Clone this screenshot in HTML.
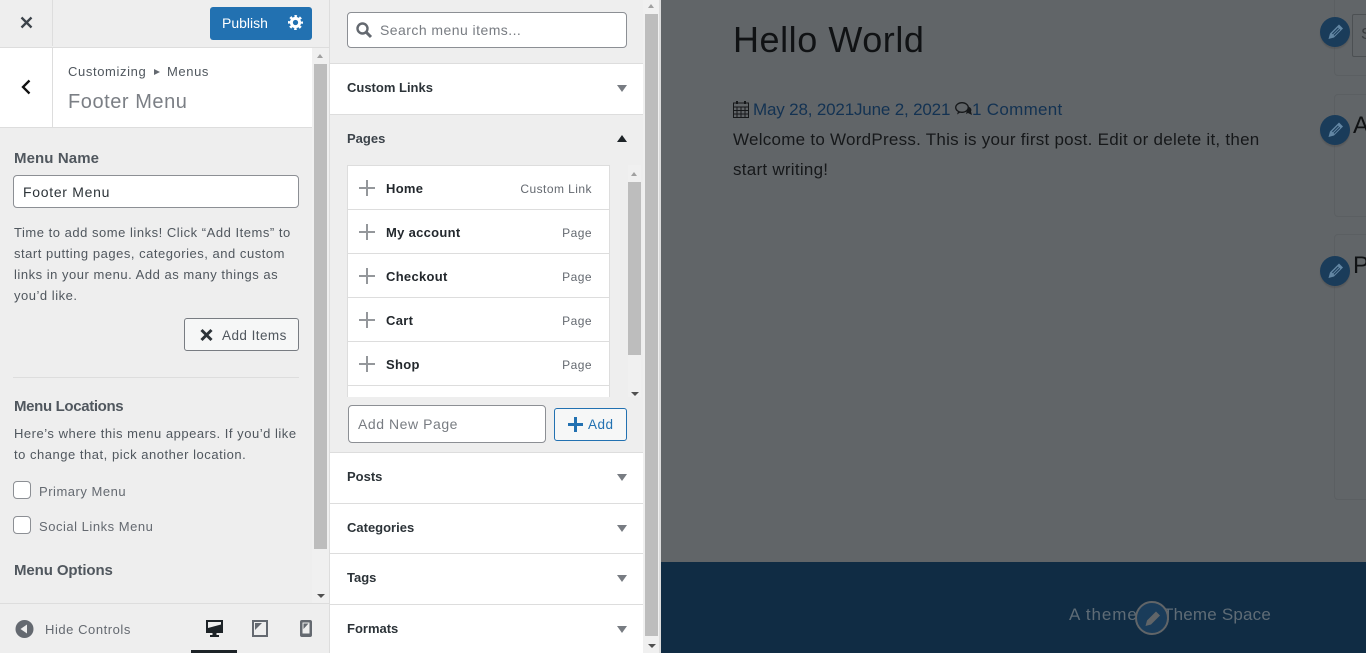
<!DOCTYPE html>
<html><head><meta charset="utf-8"><title>Customize</title>
<style>
*{box-sizing:border-box}
html,body{margin:0;padding:0;width:1366px;height:653px;overflow:hidden;background:#616568}
body{font-family:"Liberation Sans",sans-serif;font-size:14px;color:#50575e;position:relative}
.a{position:absolute}
.t{position:absolute;white-space:nowrap;line-height:20px}
.s{font-size:13px;letter-spacing:.52px}
.sec{position:absolute;left:330px;width:313px;background:#fff;border-top:1px solid #ddd}
.b{font-weight:700;font-size:13px;color:#2c3338}
.dn{position:absolute;left:617px;width:0;height:0;border-left:5px solid transparent;border-right:5px solid transparent;border-top:7px solid #787c82}
.up{position:absolute;width:0;height:0;border-left:3.5px solid transparent;border-right:3.5px solid transparent;border-bottom:4px solid #a0a0a0}
.sd{position:absolute;width:0;height:0;border-left:4px solid transparent;border-right:4px solid transparent;border-top:4px solid #505050}
.row{position:absolute;left:348px;width:261px;height:44px;background:#fff;border-bottom:1px solid #ddd}
.pl{position:absolute;left:11px;top:14px;width:16px;height:16px}
.pl:before{content:"";position:absolute;left:7px;top:0;width:2px;height:16px;background:#94979b}
.pl:after{content:"";position:absolute;left:0;top:7px;width:16px;height:2px;background:#94979b}
.rn{position:absolute;left:38px;top:13px;font-size:13px;font-weight:700;color:#23282d;line-height:20px;white-space:nowrap;letter-spacing:.3px}
.rt{position:absolute;right:17px;top:13px;font-size:12px;color:#646970;line-height:20px;white-space:nowrap;letter-spacing:.45px}
.pen{position:absolute;width:30px;height:30px;border-radius:50%;background:#1a3c5a;box-shadow:0 2px 1px rgba(70,70,70,.35)}
.pen svg{position:absolute;left:8px;top:6px}
</style></head><body>

<!-- left panel -->
<div class="a" style="left:0;top:0;width:329px;height:653px;background:#eee"></div>
<div class="a" style="left:329px;top:0;width:1px;height:653px;background:#ddd"></div>

<!-- header -->
<div class="a" style="left:52px;top:0;width:1px;height:46px;background:#ddd"></div>
<div class="a" style="left:0;top:47px;width:329px;height:1px;background:#ddd"></div>
<svg class="a" style="left:20px;top:16px" width="13" height="13" viewBox="0 0 13 13"><path d="M1.500 1.500L11.500 11.500M11.500 1.500L1.500 11.500" stroke="#3c434a" stroke-width="2.300" fill="none"/></svg>
<div class="a" style="left:210px;top:7px;width:102px;height:33px;background:#2271b1;border-radius:3px"></div>
<div class="t" style="left:222px;top:13px;color:#fff;font-size:14px">Publish</div>
<svg class="a" style="left:288px;top:15px" width="15" height="15" viewBox="0 0 20 20"><circle cx="10" cy="10" r="5.500" fill="none" stroke="#fff" stroke-width="4"/><circle cx="10" cy="10" r="8.500" fill="none" stroke="#fff" stroke-width="3" stroke-dasharray="3.340 3.340" stroke-dashoffset="1.670"/></svg>

<!-- title section -->
<div class="a" style="left:0;top:48px;width:312px;height:79px;background:#fff"></div>
<div class="a" style="left:0;top:127px;width:312px;height:1px;background:#ddd"></div>
<div class="a" style="left:52px;top:48px;width:1px;height:80px;background:#ddd"></div>
<svg class="a" style="left:20px;top:79px" width="12" height="16" viewBox="0 0 12 16"><path d="M9.500 1.500L3 8l6.500 6.500" stroke="#111" stroke-width="2.300" fill="none"/></svg>
<div class="t" style="left:68px;top:62px;font-size:13px;letter-spacing:.62px;color:#50575e">Customizing</div>
<div class="a" style="left:154px;top:69px;width:0;height:0;border-left:6px solid #646970;border-top:3px solid transparent;border-bottom:3px solid transparent"></div>
<div class="t" style="left:167px;top:62px;font-size:13px;letter-spacing:.6px;color:#50575e">Menus</div>
<div class="t" style="left:68px;top:89px;font-size:20px;line-height:26px;color:#7b7f85;letter-spacing:.55px">Footer Menu</div>

<!-- left scrollbar -->
<div class="a" style="left:312px;top:48px;width:17px;height:555px;background:#f0f0f0"></div>
<div class="a" style="left:314px;top:64px;width:13px;height:485px;background:#bdbdbd"></div>
<div class="up" style="left:317px;top:54px"></div>
<div class="sd" style="left:317px;top:594px"></div>

<!-- left content -->
<div class="t" style="left:14px;top:149px;font-size:15px;font-weight:700;color:#50575e;letter-spacing:.1px">Menu Name</div>
<div class="a" style="left:13px;top:175px;width:286px;height:33px;background:#fff;border:1px solid #8c8f94;border-radius:4px"></div>
<div class="t" style="left:23px;top:182px;font-size:14px;letter-spacing:.7px;color:#2c3338">Footer Menu</div>
<div class="t s" style="left:14px;top:222px;line-height:21px;color:#50575e">Time to add some links! Click “Add Items” to<br>start putting pages, categories, and custom<br>links in your menu. Add as many things as<br>you’d like.</div>
<div class="a" style="left:184px;top:318px;width:115px;height:33px;background:#f6f7f7;border:1px solid #787c82;border-radius:3px"></div>
<svg class="a" style="left:200px;top:328px" width="13" height="14" viewBox="0 0 13 14"><path d="M1.500 2L11.500 12M11.500 2L1.500 12" stroke="#2c3338" stroke-width="3" fill="none"/></svg>
<div class="t" style="left:222px;top:326px;font-size:13.500px;letter-spacing:.45px;color:#50575e">Add Items</div>
<div class="a" style="left:13px;top:377px;width:286px;height:1px;background:#ddd"></div>
<div class="t" style="left:14px;top:397px;font-size:15px;font-weight:700;color:#50575e;letter-spacing:-.35px">Menu Locations</div>
<div class="t s" style="left:14px;top:423px;line-height:21px;color:#50575e">Here’s where this menu appears. If you’d like<br>to change that, pick another location.</div>
<div class="a" style="left:13px;top:481px;width:18px;height:18px;background:#fff;border:1px solid #8c8f94;border-radius:4px"></div>
<div class="t s" style="left:39px;top:482px;color:#646970">Primary Menu</div>
<div class="a" style="left:13px;top:516px;width:18px;height:18px;background:#fff;border:1px solid #8c8f94;border-radius:4px"></div>
<div class="t s" style="left:39px;top:517px;color:#646970">Social Links Menu</div>
<div class="t" style="left:14px;top:561px;font-size:15px;font-weight:700;color:#50575e;letter-spacing:-.1px">Menu Options</div>

<!-- footer controls -->
<div class="a" style="left:0;top:603px;width:329px;height:50px;background:#eee;border-top:1px solid #ddd"></div>
<svg class="a" style="left:15px;top:620px" width="19" height="18" viewBox="0 0 18 18"><circle cx="9" cy="9" r="9" fill="#646970"/><path d="M11.500 4.500v9L5 9z" fill="#eee"/></svg>
<div class="t" style="left:45px;top:620px;font-size:13px;letter-spacing:.55px;color:#646970">Hide Controls</div>
<svg class="a" style="left:205px;top:619px" width="19" height="19" viewBox="0 0 19 19"><path fill="#1d2327" d="M1 1h17v13H11.500v2H14v2H5v-2h2.500v-2H1z"/><path fill="#eee" d="M3 3h13v2.500L3 9z"/></svg>
<div class="a" style="left:191px;top:650px;width:46px;height:3px;background:#1d2327"></div>
<svg class="a" style="left:252px;top:620px" width="16" height="17" viewBox="0 0 16 17"><path fill="#646970" d="M0 0h16v17H0z"/><path fill="#eee" d="M2 2h12v13H2z"/><path fill="#646970" d="M3 3h7L3 10z"/></svg>
<svg class="a" style="left:300px;top:620px" width="12" height="17" viewBox="0 0 12 17"><path fill="#646970" d="M2 0h8a2 2 0 0 1 2 2v13a2 2 0 0 1-2 2H2a2 2 0 0 1-2-2V2a2 2 0 0 1 2-2z"/><path fill="#eee" d="M2.500 2.500h7v11h-7z"/><path fill="#646970" d="M3.500 3.500h5L3.500 9z"/></svg>

<!-- middle panel -->
<div class="a" style="left:330px;top:0;width:331px;height:653px;background:#eee"></div>

<!-- search -->
<div class="a" style="left:347px;top:12px;width:280px;height:36px;background:#fff;border:1px solid #8c8f94;border-radius:4px"></div>
<svg class="a" style="left:355px;top:21px" width="18" height="18" viewBox="0 0 18 18"><circle cx="7.500" cy="7.500" r="5" stroke="#646970" stroke-width="2.400" fill="none"/><path d="M11.300 11.300L16 16" stroke="#646970" stroke-width="3" fill="none"/></svg>
<div class="t" style="left:380px;top:20px;font-size:14px;letter-spacing:.45px;color:#787c82">Search menu items...</div>

<!-- sections -->
<div class="sec" style="top:63px;height:51px"></div>
<div class="t b" style="left:347px;top:78px">Custom Links</div>
<div class="dn" style="top:85px"></div>
<div class="a" style="left:330px;top:114px;width:313px;height:1px;background:#ddd"></div>
<div class="t b" style="left:347px;top:129px;color:#3c434a">Pages</div>
<div class="a" style="left:617px;top:135px;width:0;height:0;border-left:5px solid transparent;border-right:5px solid transparent;border-bottom:7px solid #1d2327"></div>

<!-- pages list -->
<div class="a" style="left:347px;top:165px;width:263px;height:232px;background:#fff;border:1px solid #ddd;border-bottom:0"></div>
<div class="row" style="top:166px"><span class="pl"></span><span class="rn">Home</span><span class="rt">Custom Link</span></div>
<div class="row" style="top:210px"><span class="pl"></span><span class="rn">My account</span><span class="rt">Page</span></div>
<div class="row" style="top:254px"><span class="pl"></span><span class="rn">Checkout</span><span class="rt">Page</span></div>
<div class="row" style="top:298px"><span class="pl"></span><span class="rn">Cart</span><span class="rt">Page</span></div>
<div class="row" style="top:342px"><span class="pl"></span><span class="rn">Shop</span><span class="rt">Page</span></div>

<!-- inner scrollbar -->
<div class="a" style="left:628px;top:165px;width:13px;height:232px;background:#f0f0f0"></div>
<div class="a" style="left:628px;top:182px;width:13px;height:173px;background:#bdbdbd"></div>
<div class="up" style="left:631px;top:172px"></div>
<div class="sd" style="left:631px;top:392px"></div>

<!-- add new page -->
<div class="a" style="left:348px;top:405px;width:198px;height:38px;background:#fff;border:1px solid #8c8f94;border-radius:4px"></div>
<div class="t" style="left:358px;top:414px;font-size:14px;letter-spacing:.55px;color:#787c82">Add New Page</div>
<div class="a" style="left:554px;top:408px;width:73px;height:33px;background:#f6f7f7;border:1px solid #2271b1;border-radius:3px"></div>
<svg class="a" style="left:568px;top:417px" width="15" height="15" viewBox="0 0 15 15"><path d="M7.500 0v15M0 7.500h15" stroke="#2271b1" stroke-width="3"/></svg>
<div class="t" style="left:588px;top:415px;font-size:13.500px;letter-spacing:.5px;color:#2271b1">Add</div>

<div class="sec" style="top:452px;height:51px"></div>
<div class="t b" style="left:347px;top:467px">Posts</div>
<div class="dn" style="top:474px"></div>
<div class="sec" style="top:503px;height:51px"></div>
<div class="t b" style="left:347px;top:518px">Categories</div>
<div class="dn" style="top:525px"></div>
<div class="sec" style="top:553px;height:51px"></div>
<div class="t b" style="left:347px;top:568px">Tags</div>
<div class="dn" style="top:575px"></div>
<div class="sec" style="top:604px;height:49px"></div>
<div class="t b" style="left:347px;top:619px">Formats</div>
<div class="dn" style="top:626px"></div>

<!-- middle scrollbar -->
<div class="a" style="left:643px;top:0;width:16px;height:653px;background:#f0f0f0"></div>
<div class="a" style="left:645px;top:14px;width:13px;height:622px;background:#bdbdbd"></div>
<div class="up" style="left:648px;top:4px"></div>
<div class="sd" style="left:648px;top:644px"></div>
<div class="a" style="left:659px;top:0;width:2px;height:653px;background:#ddd"></div>

<!-- preview -->
<div class="a" style="left:661px;top:0;width:705px;height:562px;background:#616568"></div>
<div class="a" style="left:661px;top:562px;width:705px;height:91px;background:#102c44"></div>
<div class="t" style="left:733px;top:18px;font-size:36px;line-height:44px;letter-spacing:.55px;color:#101214">Hello World</div>
<svg class="a" style="left:733px;top:100px" width="16" height="18" viewBox="0 0 16 18"><path fill="none" stroke="#16181a" stroke-width="1" d="M.5 3h15v14.500H.5zM.5 7h15M.5 10.500h15M.5 14h15M4 7v10.500M8 7v10.500M12 7v10.500"/><path stroke="#16181a" stroke-width="2" d="M4 1v3M12 1v3"/></svg>
<div class="t" style="left:753px;top:100px;font-size:17px;letter-spacing:-.17px;color:#133252">May 28, 2021June 2, 2021</div>
<svg class="a" style="left:955px;top:102px" width="18" height="14" viewBox="0 0 18 14"><ellipse cx="7" cy="5.500" rx="6.300" ry="4.800" fill="none" stroke="#16181a" stroke-width="1.300"/><path d="M3 9.500L2 12.500 6 10zM13 4.500c3 1 4 3 3 5l1 3.500-4-2-2 1z" fill="#16181a"/></svg>
<div class="t" style="left:972px;top:100px;font-size:17px;letter-spacing:.3px;color:#133252">1 Comment</div>
<div class="t" style="left:733px;top:125px;font-size:17px;line-height:30px;letter-spacing:.26px;color:#16181a">Welcome to WordPress. This is your first post. Edit or delete it, then<br>start writing!</div>

<!-- widgets at right -->
<div class="a" style="left:1334px;top:-20px;width:40px;height:96px;border:1px solid #5b5f62;border-radius:4px"></div>
<div class="a" style="left:1352px;top:14px;width:20px;height:43px;border:1px solid #4c5053;border-radius:2px"></div>
<div class="t" style="left:1361px;top:25px;font-size:16px;color:#3a3d40">S</div>
<div class="a" style="left:1334px;top:94px;width:40px;height:123px;border:1px solid #5b5f62;border-radius:4px"></div>
<div class="t" style="left:1353px;top:112px;font-size:24px;line-height:28px;color:#101214">A</div>
<div class="a" style="left:1334px;top:234px;width:40px;height:266px;border:1px solid #5b5f62;border-radius:4px"></div>
<div class="t" style="left:1353px;top:252px;font-size:24px;line-height:28px;color:#101214">P</div>

<div class="pen" style="left:1320px;top:17px"><svg width="16" height="17" viewBox="0 0 16 17"><path fill="#6286a3" fill-rule="evenodd" d="M11 1.500l4 4-9 9-5.500 1.500L2 10.500zM4 10.500l.8.800 6-6-.8-.8zM5.500 12l.8.800 6-6-.8-.8z"/></svg></div>
<div class="pen" style="left:1320px;top:115px"><svg width="16" height="17" viewBox="0 0 16 17"><path fill="#6286a3" fill-rule="evenodd" d="M11 1.500l4 4-9 9-5.500 1.500L2 10.500zM4 10.500l.8.800 6-6-.8-.8zM5.500 12l.8.800 6-6-.8-.8z"/></svg></div>
<div class="pen" style="left:1320px;top:256px"><svg width="16" height="17" viewBox="0 0 16 17"><path fill="#6286a3" fill-rule="evenodd" d="M11 1.500l4 4-9 9-5.500 1.500L2 10.500zM4 10.500l.8.800 6-6-.8-.8zM5.500 12l.8.800 6-6-.8-.8z"/></svg></div>

<!-- footer text -->
<div class="t" style="left:1069px;top:605px;font-size:17px;letter-spacing:.9px;color:#5f6c76">A theme</div>
<div class="t" style="left:1163px;top:605px;font-size:17px;letter-spacing:.2px;color:#5f6c76">Theme Space</div>
<div class="a" style="left:1135px;top:601px;width:34px;height:34px;border-radius:50%;background:#1a3c5a;border:2px solid #616568"><svg style="position:absolute;left:8px;top:7px" width="16" height="17" viewBox="0 0 16 17"><path fill="#616568" d="M11 1.500l4 4-9 9-5.500 1.500L2 10.500z"/></svg></div>

</body></html>
